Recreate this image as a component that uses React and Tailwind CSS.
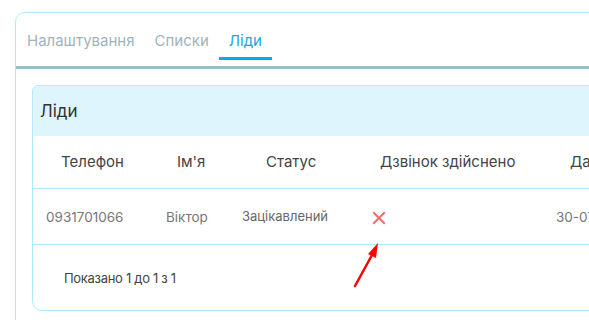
import React from 'react';

const cols = [
    { w: 'w-[120px]', head: 'Телефон', hp: 'pl-[28px]' },
    { w: 'w-[76px]', head: "Ім'я", hp: 'pl-[24px]' },
    { w: 'w-[130px]', head: 'Статус', hp: 'pl-[37px]' },
    { w: 'w-[184px]', head: 'Дзвінок здійснено', hp: 'pl-[21px]' },
    { w: 'w-[160px]', head: 'Дата', hp: 'pl-[27px]' },
];

export default function App() {
    return (
        <div className="relative w-[589px] h-[320px] overflow-hidden bg-white font-['Inter',sans-serif]">
            <div className="pt-3 pl-[15px]">
                <div className="w-[700px] h-[330px] border border-[#b3e9fb] rounded-tl-[10px]">

                    {/* Tabs */}
                    <div className="flex pt-[18px] pl-px">
                        <div className="px-[10px] pb-[9px] text-[15px] leading-5 text-[#a0b3bd]">Налаштування</div>
                        <div className="px-[10px] pb-[9px] text-[15px] leading-5 text-[#a0b3bd]">Списки</div>
                        <div className="px-[10px] pb-[6px] text-[15px] leading-5 text-[#1aa8e0] border-b-[3px] border-[#00aeef]">Ліди</div>
                    </div>
                    <div className="mt-[6px] h-[3px] bg-[#9dbdc9]"></div>

                    {/* Leads card */}
                    <div className="pt-[16px] pl-4">
                        <div className="w-[680px] border border-[#b3e9fb] rounded-tl-[6px] rounded-bl-[10px] overflow-hidden">
                            <div className="h-[50px] bg-[#dff5fd] flex items-center pl-[7px] pt-[2px] text-[17px] text-[#333]">Ліди</div>

                            <div className="flex h-[53px] items-center pt-px border-b border-[#b3e9fb] text-[15px] text-[#444]">
                                {cols.map((c) => (
                                    <div key={c.head} className={`${c.w} ${c.hp} shrink-0`}>{c.head}</div>
                                ))}
                            </div>

                            <div className="flex h-[56px] items-center pt-px border-b border-[#b3e9fb] text-[13.5px] text-[#777]">
                                <div className="w-[120px] shrink-0 pl-[13px]">0931701066</div>
                                <div className="w-[76px] shrink-0 pl-[13px]">Віктор</div>
                                <div className="w-[130px] shrink-0 pl-[13px] text-[13px] text-[#666]">Зацікавлений</div>
                                <div className="w-[184px] shrink-0 pl-[13px] flex">
                                    <svg width="14" height="14" viewBox="0 0 14 14" className="mt-px">
                                        <path d="M2 2 L12 12 M12 2 L2 12" stroke="#f26b6b" strokeWidth="2" strokeLinecap="square" />
                                    </svg>
                                </div>
                                <div className="w-[160px] shrink-0 pl-[13px]">30-07-2024</div>
                            </div>

                            <div className="h-[65px] flex items-center pl-[31px] pt-[2px] text-[13px] text-[#444] tracking-[-0.3px]">
                                Показано 1 до 1 з 1
                            </div>
                        </div>
                    </div>
                </div>
            </div>

            {/* Annotation arrow */}
            <svg className="absolute left-0 top-0 pointer-events-none" width="589" height="320">
                <line x1="355" y1="286" x2="372" y2="255" stroke="#ff0000" strokeWidth="2.5" strokeLinecap="round" />
                <polygon points="378,243 368,254 376,258" fill="#ff0000" />
            </svg>
        </div>
    );
}
